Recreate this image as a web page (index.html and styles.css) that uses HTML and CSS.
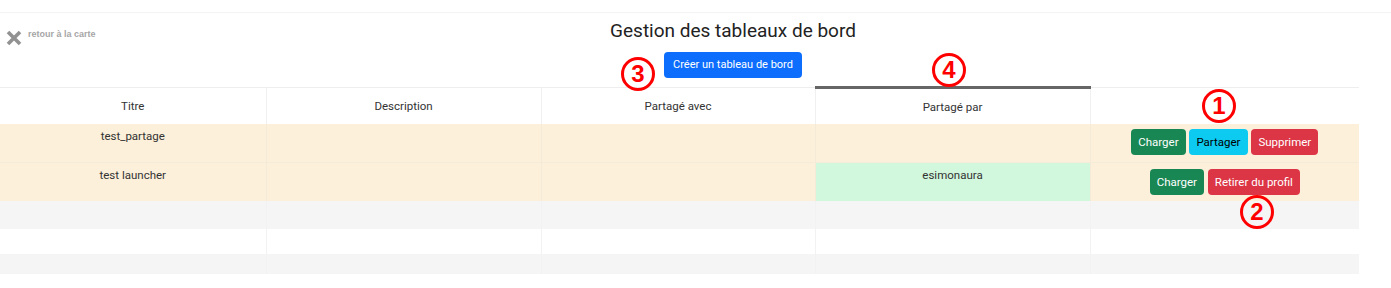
FILE: index.html
```html
<!DOCTYPE html>
<html lang="fr">
<head>
    <meta charset="UTF-8">
    <meta name="viewport" content="width=device-width, initial-scale=1.0">
    <title>Gestion des tableaux de bord</title>
    <link rel="stylesheet" href="styles.css">
</head>
<body>
    <div class="page">
        <div class="topbar">
            <a class="back-link" href="#">
                <svg class="back-icon" viewBox="0 0 16 16" width="16" height="16">
                    <path d="M2 2 L14 14 M14 2 L2 14" stroke="#929292" stroke-width="3.6" stroke-linecap="butt"/>
                </svg>
                <span>retour à la carte</span>
            </a>
            <div class="heading">
                <h1 class="title">Gestion des tableaux de bord</h1>
                <button class="btn btn-primary">Créer un tableau de bord</button>
            </div>
        </div>

        <table class="boards">
            <colgroup>
                <col style="width: 266px">
                <col style="width: 275px">
                <col style="width: 274px">
                <col style="width: 275px">
                <col style="width: 269px">
            </colgroup>
            <thead>
                <tr>
                    <th>Titre</th>
                    <th>Description</th>
                    <th>Partagé avec</th>
                    <th class="active">Partagé par</th>
                    <th></th>
                </tr>
            </thead>
            <tbody>
                <tr class="row-own">
                    <td>test_partage</td>
                    <td></td>
                    <td></td>
                    <td></td>
                    <td class="actions">
                        <button class="btn btn-success">Charger</button>
                        <button class="btn btn-info">Partager</button>
                        <button class="btn btn-danger">Supprimer</button>
                    </td>
                </tr>
                <tr class="row-own row-second">
                    <td>test launcher</td>
                    <td></td>
                    <td></td>
                    <td class="shared">esimonaura</td>
                    <td class="actions">
                        <button class="btn btn-success">Charger</button>
                        <button class="btn btn-danger">Retirer du profil</button>
                    </td>
                </tr>
                <tr class="row-empty row-a"><td></td><td></td><td></td><td></td><td></td></tr>
                <tr class="row-empty row-b"><td></td><td></td><td></td><td></td><td></td></tr>
                <tr class="row-empty row-c"><td></td><td></td><td></td><td></td><td></td></tr>
            </tbody>
        </table>

        <!-- annotation markers -->
        <span class="marker m1">1</span>
        <span class="marker m2">2</span>
        <span class="marker m3">3</span>
        <span class="marker m4">4</span>
    </div>
</body>
</html>
```

FILE: styles.css
```css
body {
    margin: 0;
    font-family: Roboto, 'Liberation Sans', sans-serif;
    color: #333;
    background-color: #fff;
}

.page {
    position: relative;
    width: 1391px;
    height: 288px;
    overflow: hidden;
}

.topbar {
    display: flex;
    margin-top: 12px;
    border-top: 1px solid #f3f3f3;
    padding-right: 45px;
    height: 73px;
}

.back-link {
    display: flex;
    align-items: flex-start;
    width: 120px;
    padding: 17px 0 0 6px;
    box-sizing: border-box;
    text-decoration: none;
    color: #a6a6a6;
    font-size: 9px;
    font-weight: bold;
    font-family: 'Liberation Sans', Arial, sans-serif;
}

.back-link span {
    margin-top: -1px;
}

.back-icon {
    margin-right: 6px;
}

.heading {
    flex: 1;
    display: flex;
    flex-direction: column;
    align-items: center;
}

.title {
    margin: 8px 0 11px;
    font-size: 19px;
    font-weight: normal;
    color: #222;
    line-height: 20px;
}

.btn {
    font-family: Roboto, 'Liberation Sans', sans-serif;
    font-size: 11.5px;
    line-height: 16px;
    padding: 4px 6px;
    border: 1px solid transparent;
    border-radius: 4px;
    color: #fff;
    cursor: pointer;
}

.btn-primary {
    background-color: #0d6efd;
    font-size: 11px;
    padding: 4px 8px;
}

.btn-success {
    background-color: #198754;
}

.btn-info {
    background-color: #0dcaf0;
    color: #000;
}

.btn-danger {
    background-color: #dc3545;
}

.boards {
    border-collapse: collapse;
    table-layout: fixed;
    width: 1359px;
    font-size: 11.5px;
}

.boards th,
.boards td {
    text-align: center;
    vertical-align: top;
    border-left: 1px solid #f0f0f0;
    padding: 0;
}

.boards th:first-child,
.boards td:first-child {
    border-left: none;
}

.boards th {
    height: 35px;
    font-weight: normal;
    border-top: 1px solid #eeeeee;
    vertical-align: middle;
    color: #333;
}

.boards th.active {
    border-top: 3px solid #666;
}

.row-own {
    background-color: #fcf0da;
}

.row-own td {
    height: 38px;
    padding-top: 5px;
    box-sizing: border-box;
    border-left-color: #f3ead8;
}

.row-second td {
    height: 39px;
    border-top: 1px solid #f4ebd9;
}

.row-own td.actions {
    padding-top: 5px;
}

.row-second td.actions {
    padding-top: 6px;
}

.actions .btn + .btn {
    margin-left: 1px;
}

.shared {
    background-color: #d1f7dd;
}

.row-empty td {
    border-left-color: #f2f2f2;
}

.row-a {
    background-color: #f5f5f5;
}

.row-a td {
    height: 28px;
}

.row-b td {
    height: 25px;
}

.row-c {
    background-color: #f5f5f5;
}

.row-c td {
    height: 20px;
}

.marker {
    position: absolute;
    width: 28px;
    height: 28px;
    border: 3px solid #ff0000;
    border-radius: 50%;
    color: #ff0000;
    font-family: 'Liberation Sans', Arial, sans-serif;
    font-weight: bold;
    font-size: 24px;
    line-height: 28px;
    text-align: center;
}

.m1 {
    left: 1202px;
    top: 89px;
}

.m2 {
    left: 1240px;
    top: 195px;
}

.m3 {
    left: 621px;
    top: 57px;
}

.m4 {
    left: 932px;
    top: 53px;
}
```
